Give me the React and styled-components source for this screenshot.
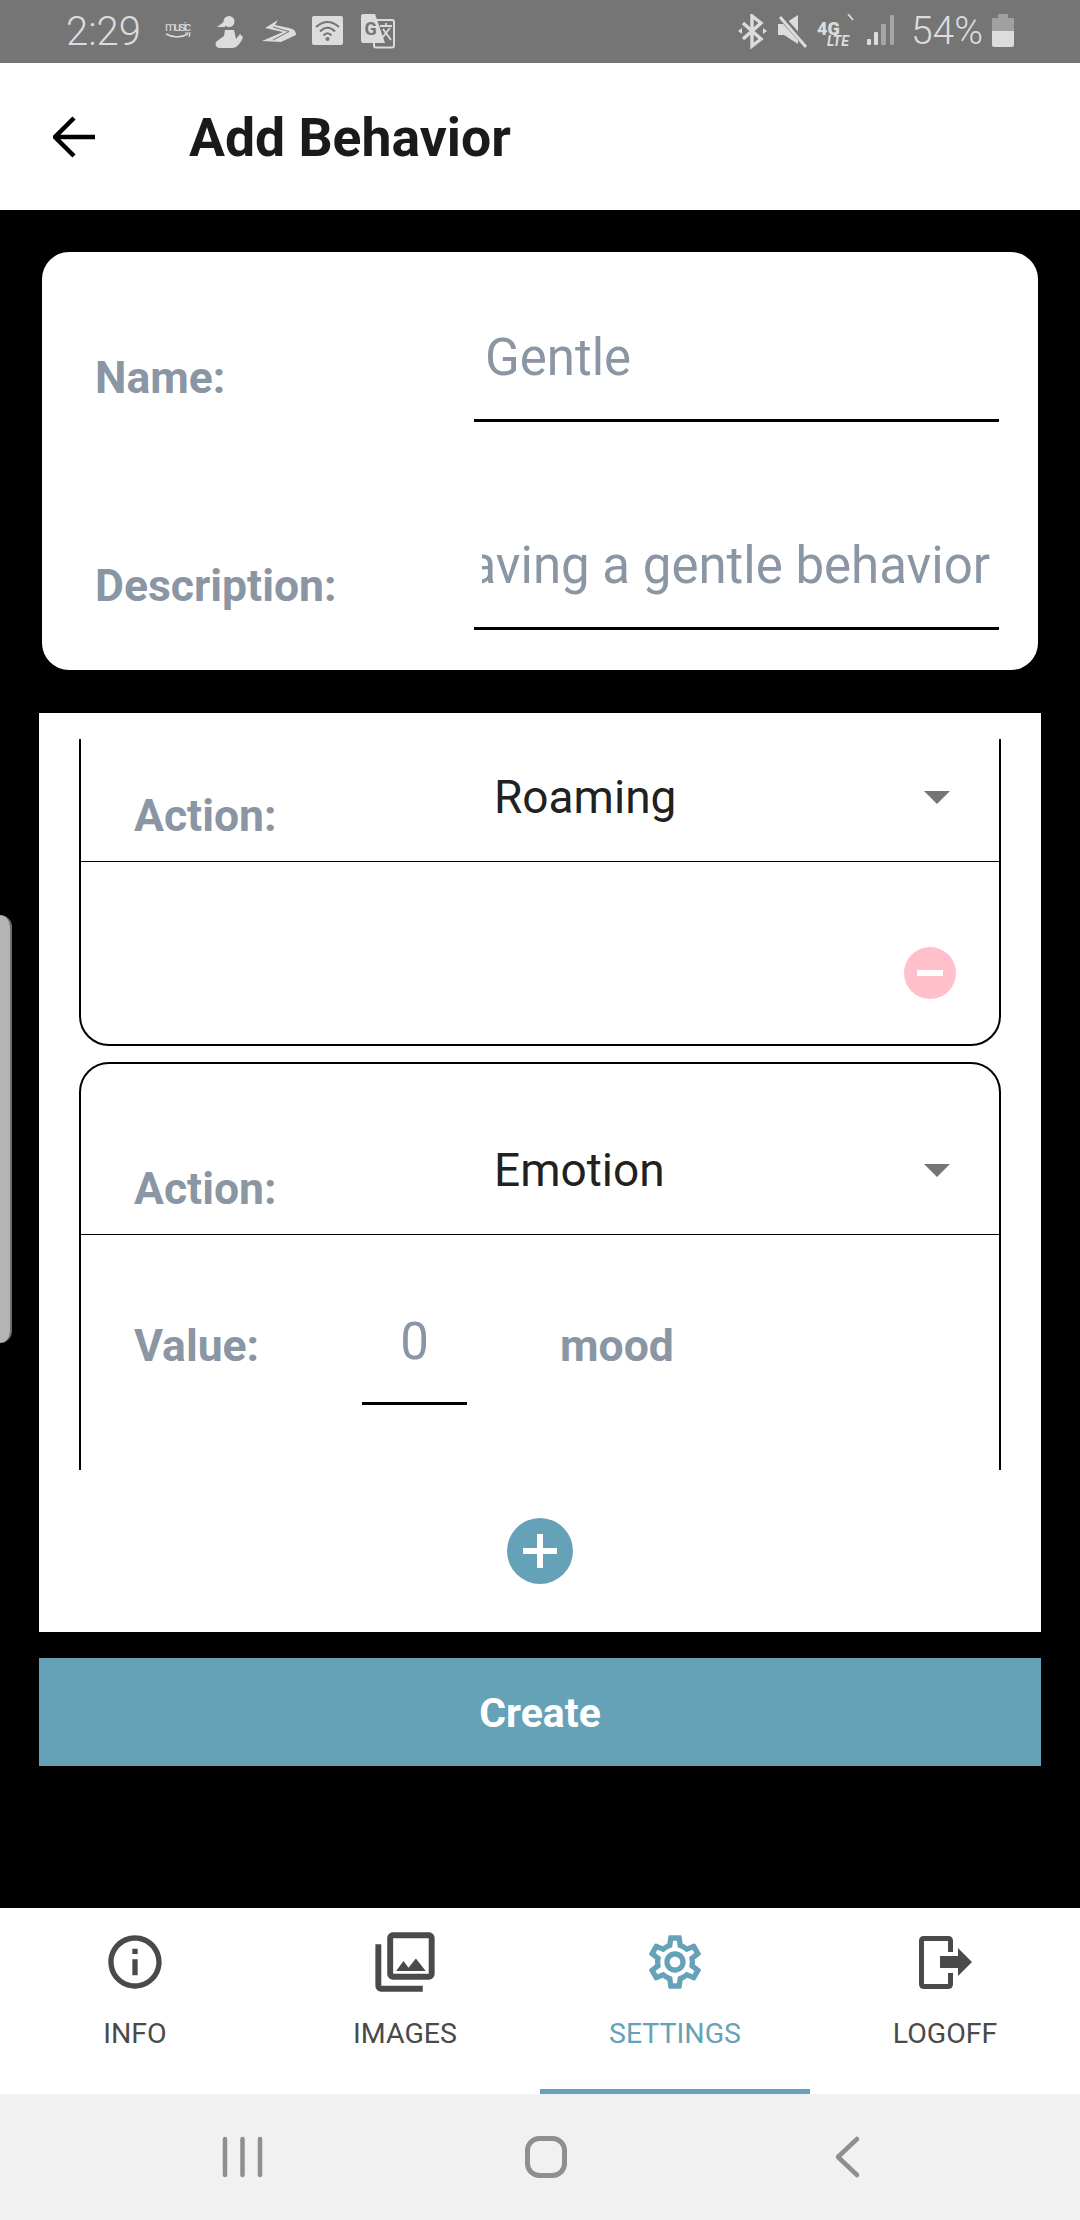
import React from "react"
import styled, { createGlobalStyle } from "styled-components"

const GlobalStyle = createGlobalStyle`
  html, body {
    margin: 0;
    padding: 0;
    background: #000;
  }
  * {
    box-sizing: border-box;
  }
  body {
    font-family: Roboto, "Liberation Sans", sans-serif;
  }
`

const Page = styled.div`
  position: relative;
  width: 1080px;
  height: 2220px;
  display: flex;
  flex-direction: column;
  overflow: hidden;
  background: #000;
`

const StatusBar = styled.div`
  height: 63px;
  flex: none;
  display: flex;
  align-items: center;
  justify-content: space-between;
  padding: 0 66px;
  background: #757575;
  color: #dcdcdc;
`

const StatusGroup = styled.div`
  display: flex;
  align-items: center;
`

const StatusText = styled.span`
  font-size: ${(p) => p.$size}px;
  font-weight: 300;
  line-height: 63px;
  margin-left: ${(p) => p.$ml || 0}px;
`

const StatusIcon = styled.svg`
  display: block;
  height: 36px;
  flex: none;
  margin-left: ${(p) => p.$ml || 0}px;
`

const Header = styled.header`
  height: 147px;
  flex: none;
  display: flex;
  align-items: center;
  padding-left: 53px;
  background: #fff;
`

const BackArrow = styled.svg`
  display: block;
  width: 42px;
  height: 42px;
  margin-right: 94px;
`

const Title = styled.h1`
  margin: 0;
  padding-top: 2px;
  font-size: 53.5px;
  line-height: 64px;
  font-weight: 700;
  color: #1a1a1a;
`

const Main = styled.main`
  flex: 1;
  display: flex;
  flex-direction: column;
  padding-top: 42px;
  background: #000;
`

const InfoCard = styled.section`
  height: 418px;
  margin: 0 42px 43px;
  padding: 0 39px 0 53px;
  border-radius: 27px;
  background: #fff;
`

const FormRow = styled.div`
  display: flex;
  align-items: flex-end;
  height: ${(p) => p.$height}px;
`

const FieldLabel = styled.label`
  display: block;
  flex: none;
  font-size: 44.5px;
  line-height: 52px;
  font-weight: 700;
  color: #8a96a3;
  padding-bottom: ${(p) => p.$pb}px;
`

const TextField = styled.div`
  flex: none;
  width: 525px;
  margin-left: auto;
  height: ${(p) => p.$height}px;
  padding: 0 9px 0 8px;
  border-bottom: 3px solid #000;
  font-size: 51px;
  line-height: 60px;
  color: #8a96a3;
`

const FieldValue = styled.div`
  display: flex;
  justify-content: ${(p) => (p.$end ? "flex-end" : "flex-start")};
  padding-left: ${(p) => (p.$end ? 0 : 3)}px;
  overflow: hidden;
  white-space: nowrap;
`

const Panel = styled.section`
  height: 919px;
  padding-top: 26px;
  margin: 0 39px 26px;
  background: #fff;
`

const ScrollArea = styled.div`
  height: 731px;
  margin: 0 40px 48px;
  overflow: hidden;
`

const ScrollContent = styled.div`
  margin-top: -50px;
  display: flex;
  flex-direction: column;
  gap: 16px;
`

const ActionCard = styled.article`
  border: 2px solid #000;
  border-radius: 30px;
`

const ActionRow = styled.div`
  height: 171px;
  display: flex;
  align-items: flex-end;
  padding-left: 53px;
  border-bottom: 1px solid #000;
`

const ActionLabel = styled(FieldLabel)`
  width: 360px;
`

const Select = styled.div`
  flex: 1;
  display: flex;
  align-items: center;
  justify-content: space-between;
  height: 60px;
  margin-bottom: 34px;
  padding-right: 49px;
  font-size: 46px;
  line-height: 60px;
  color: #212121;
`

const Caret = styled.span`
  width: 0;
  height: 0;
  border-left: 13px solid transparent;
  border-right: 13px solid transparent;
  border-top: 13px solid #757575;
`

const CardBody = styled.div`
  height: 182px;
  display: flex;
  flex-direction: column;
  align-items: flex-end;
  justify-content: flex-end;
  padding: 0 43px 45px 0;
`

const ValueBody = styled.div`
  height: 300px;
  display: flex;
  align-items: flex-start;
  padding: 77px 0 0 53px;
`

const ValueLabel = styled(FieldLabel)`
  width: 228px;
  margin-top: 8px;
`

const UnitLabel = styled(FieldLabel)`
  margin: 8px 0 0 93px;
`

const NumberField = styled.div`
  width: 105px;
  height: 93px;
  border-bottom: 3px solid #000;
  text-align: center;
  font-size: 51px;
  line-height: 60px;
  color: #8a96a3;
`

const RoundButton = styled.button`
  display: flex;
  align-items: center;
  justify-content: center;
  flex: none;
  width: ${(p) => p.$size}px;
  height: ${(p) => p.$size}px;
  margin: ${(p) => (p.$center ? "0 auto" : "0")};
  padding: 0;
  border: none;
  border-radius: 50%;
  background: ${(p) => p.$bg};
`

const CreateButton = styled.button`
  display: block;
  height: 108px;
  margin: 0 39px;
  padding: 2px 0 0;
  border: none;
  background: #65a2b8;
  color: #fff;
  font-family: inherit;
  font-size: 41px;
  font-weight: 700;
`

const BottomNav = styled.nav`
  height: 186px;
  flex: none;
  display: grid;
  grid-template-columns: repeat(4, 1fr);
  background: #fff;
`

const NavItem = styled.div`
  position: relative;
  height: 186px;
  padding-top: 22px;
  display: flex;
  flex-direction: column;
  align-items: center;
  font-size: 28.5px;
  line-height: 34px;
  color: ${(p) => (p.$active ? "#65a2b8" : "#4a4a4a")};
  border-bottom: 5px solid ${(p) => (p.$active ? "#65a2b8" : "transparent")};
`

const NavIcon = styled.svg`
  display: block;
  width: 64px;
  height: 64px;
  margin-bottom: 23px;
  fill: currentColor;
`

const SystemNav = styled.div`
  flex: none;
  height: 126px;
  background: #f1f1f1;
  display: flex;
  align-items: center;
  justify-content: center;
`

const SystemIcons = styled.svg`
  display: block;
  width: 1080px;
  height: 126px;
`

const EdgeHandle = styled.div`
  position: absolute;
  left: 0;
  top: 915px;
  width: 12px;
  height: 428px;
  background: #b4b4b4;
  border-right: 2px solid #6e6e6e;
  border-radius: 0 12px 12px 0;
`

const light = "#dcdcdc"

const StatusLeft = () => (
  <StatusGroup>
    <StatusText $size={40}>2:29</StatusText>
    <StatusIcon $ml={24} width="26" viewBox="0 0 26 36">
      <text x="0" y="17" fontSize="12.5" fill={light} fontFamily="Roboto" textLength="26">music</text>
      <path d="M1 20 Q12 26 23 20" fill="none" stroke={light} strokeWidth="1.5" />
      <path d="M20 19 L25 19 L24 23" fill="none" stroke={light} strokeWidth="1.2" />
    </StatusIcon>
    <StatusIcon $ml={24} width="28" viewBox="0 0 28 36">
      <circle cx="14" cy="7.500" r="5.500" fill={light} />
      <path d="M10 7 L2 13 L10 13 Z" fill={light} />
      <path d="M10 16 H19 L21 25 L25 20 L28 23 C26 29 22 34 17 34 H5 C1 34 -1 30 2 27 L9 22 Z" fill={light} />
    </StatusIcon>
    <StatusIcon $ml={18} width="35" viewBox="0 0 35 36">
      <path d="M17 6 L4 14 L22 18 L1 27 L20 28 L35 21 C35 17 33 15 28 14 L14 11 Z" fill={light} />
      <path d="M12 13 L28 17.500 L12 26" fill="none" stroke="#757575" strokeWidth="1" />
    </StatusIcon>
    <StatusIcon $ml={16} width="31" viewBox="0 0 31 36">
      <rect x="0" y="2" width="31" height="29" rx="2" fill={light} />
      <path d="M4 13 Q15.500 3 27 13 M8 17.500 Q15.500 10 23 17.500 M11.500 21.500 Q15.500 17 19.500 21.500" fill="none" stroke="#757575" strokeWidth="2" />
      <circle cx="15.500" cy="25" r="2" fill="#757575" />
    </StatusIcon>
    <StatusIcon $ml={18} width="34" viewBox="0 0 34 36">
      <rect x="13" y="6" width="20" height="27.500" rx="2" fill="#757575" stroke={light} strokeWidth="2" />
      <path d="M2 0 H14 L24 29 H2 C1 29 0 28 0 27 V2 C0 1 1 0 2 0 Z" fill={light} />
      <text x="3.500" y="21" fontSize="18" fontWeight="700" fill="#757575" fontFamily="Roboto">G</text>
      <path d="M19 12 H31 M25 9 V12 M21 24 L29 14 M22 15 L30 26" fill="none" stroke={light} strokeWidth="1.800" />
    </StatusIcon>
  </StatusGroup>
)

const StatusRight = () => (
  <StatusGroup>
    <StatusIcon width="29" viewBox="0 0 29 36">
      <path d="M14 17 L14 2 L23 9 L5 25 M14 17 L14 32 L23 25 L5 9" fill="none" stroke={light} strokeWidth="3.400" />
      <path d="M0 17 L4 14 V20 Z M29 17 L25 14 V20 Z" fill={light} />
    </StatusIcon>
    <StatusIcon $ml={11} width="30" viewBox="0 0 30 36">
      <path d="M0 10 H6 L20 1 V30 L6 21 H0 Z" fill={light} />
      <path d="M3 3 L29 32" stroke="#757575" strokeWidth="6" />
      <path d="M2 3 L28 33" stroke={light} strokeWidth="3" />
    </StatusIcon>
    <StatusIcon $ml={9} width="38" viewBox="0 0 38 36">
      <text fill={light} fontFamily="Roboto" fontWeight="900">
        <tspan x="0" y="21" fontSize="18">4G</tspan>
        <tspan x="10" y="32" fontSize="14" fontWeight="700" fontStyle="italic">LTE</tspan>
      </text>
      <path d="M31 0 L36 6" stroke={light} strokeWidth="1.800" />
    </StatusIcon>
    <StatusIcon $ml={12} width="27" viewBox="0 0 27 36">
      <rect x="0" y="25" width="4" height="6" rx="1" fill={light} />
      <rect x="7" y="18" width="4" height="13" rx="1" fill={light} />
      <rect x="14" y="10" width="5" height="21" rx="1" fill="#a6a6a6" />
      <rect x="23" y="1" width="4" height="30" rx="1" fill="#a6a6a6" />
    </StatusIcon>
    <StatusText $size={39} $ml={17}>54%</StatusText>
    <StatusIcon $ml={9} width="22" viewBox="0 0 22 36">
      <rect x="6" y="0" width="10" height="5" rx="1" fill="#a0a0a0" />
      <rect x="0" y="4" width="22" height="14" fill="#a0a0a0" />
      <path d="M0 17 H22 V31 C22 32 21 33 20 33 H2 C1 33 0 32 0 31 Z" fill={light} />
    </StatusIcon>
  </StatusGroup>
)

const ActionHeader = ({ value }) => (
  <ActionRow>
    <ActionLabel $pb={19}>Action:</ActionLabel>
    <Select>
      {value}
      <Caret />
    </Select>
  </ActionRow>
)

const App = () => (
  <Page>
    <GlobalStyle />
    <StatusBar>
      <StatusLeft />
      <StatusRight />
    </StatusBar>

    <Header>
      <BackArrow viewBox="0 0 42 42">
        <path d="M42 21 H3 M21 2 L2 21 L21 40" fill="none" stroke="#000" strokeWidth="4.500" />
      </BackArrow>
      <Title>Add Behavior</Title>
    </Header>

    <Main>
      <InfoCard>
        <FormRow $height={170}>
          <FieldLabel $pb={18}>Name:</FieldLabel>
          <TextField $height={94}>
            <FieldValue>Gentle</FieldValue>
          </TextField>
        </FormRow>
        <FormRow $height={208}>
          <FieldLabel $pb={18}>Description:</FieldLabel>
          <TextField $height={94}>
            <FieldValue $end>Having a gentle behavior</FieldValue>
          </TextField>
        </FormRow>
      </InfoCard>

      <Panel>
        <ScrollArea>
          <ScrollContent>
            <ActionCard>
              <ActionHeader value="Roaming" />
              <CardBody>
                <RoundButton $size={52} $bg="#ffc0cb">
                  <svg width="26" height="6" viewBox="0 0 26 6">
                    <rect width="26" height="6" fill="#fff" />
                  </svg>
                </RoundButton>
              </CardBody>
            </ActionCard>
            <ActionCard>
              <ActionHeader value="Emotion" />
              <ValueBody>
                <ValueLabel $pb={0}>Value:</ValueLabel>
                <NumberField>0</NumberField>
                <UnitLabel $pb={0}>mood</UnitLabel>
              </ValueBody>
            </ActionCard>
          </ScrollContent>
        </ScrollArea>
        <RoundButton $size={66} $bg="#65a2b8" $center>
          <svg width="34" height="34" viewBox="0 0 34 34">
            <path d="M17 0 V34 M0 17 H34" stroke="#fff" strokeWidth="6" />
          </svg>
        </RoundButton>
      </Panel>

      <CreateButton>Create</CreateButton>
    </Main>

    <BottomNav>
      <NavItem>
        <NavIcon viewBox="0 0 24 24">
          <path d="M11 7h2v2h-2zm0 4h2v6h-2zm1-9C6.48 2 2 6.48 2 12s4.48 10 10 10 10-4.48 10-10S17.52 2 12 2zm0 18c-4.41 0-8-3.59-8-8s3.59-8 8-8 8 3.59 8 8-3.59 8-8 8z" />
        </NavIcon>
        INFO
      </NavItem>
      <NavItem>
        <NavIcon viewBox="1.2 1.2 21.6 21.6">
          <path d="M20 4v12H8V4h12m0-2H8c-1.1 0-2 .9-2 2v12c0 1.1.9 2 2 2h12c1.1 0 2-.9 2-2V4c0-1.1-.9-2-2-2zm-8.5 9.67l1.69 2.26 2.48-3.1L19 15H9zM2 6v14c0 1.1.9 2 2 2h14v-2H4V6H2z" />
        </NavIcon>
        IMAGES
      </NavItem>
      <NavItem $active>
        <NavIcon viewBox="0 0 24 24">
          <path d="M19.43 12.98c.04-.32.07-.64.07-.98 0-.34-.03-.66-.07-.98l2.11-1.65c.19-.15.24-.42.12-.64l-2-3.46c-.09-.16-.26-.25-.44-.25-.06 0-.12.01-.17.03l-2.49 1c-.52-.4-1.08-.73-1.69-.98l-.38-2.65C14.46 2.18 14.25 2 14 2h-4c-.25 0-.46.18-.49.42l-.38 2.65c-.61.25-1.17.59-1.69.98l-2.49-1c-.06-.02-.12-.03-.18-.03-.17 0-.34.09-.43.25l-2 3.46c-.13.22-.07.49.12.64l2.11 1.65c-.04.32-.07.65-.07.98 0 .33.03.66.07.98l-2.11 1.65c-.19.15-.24.42-.12.64l2 3.46c.09.16.26.25.44.25.06 0 .12-.01.17-.03l2.49-1c.52.4 1.08.73 1.69.98l.38 2.65c.03.24.24.42.49.42h4c.25 0 .46-.18.49-.42l.38-2.65c.61-.25 1.17-.59 1.69-.98l2.49 1c.06.02.12.03.18.03.17 0 .34-.09.43-.25l2-3.46c.12-.22.07-.49-.12-.64l-2.11-1.65zm-1.98-1.71c.04.31.05.52.05.73 0 .21-.02.43-.05.73l-.14 1.13.89.7 1.08.84-.7 1.21-1.27-.51-1.04-.42-.9.68c-.43.32-.84.56-1.25.73l-1.06.43-.16 1.13-.2 1.35h-1.4l-.19-1.35-.16-1.13-1.06-.43c-.43-.18-.83-.41-1.23-.71l-.91-.7-1.06.43-1.27.51-.7-1.21 1.08-.84.89-.7-.14-1.13c-.03-.31-.05-.54-.05-.74s.02-.43.05-.73l.14-1.13-.89-.7-1.08-.84.7-1.21 1.27.51 1.04.42.9-.68c.43-.32.84-.56 1.25-.73l1.06-.43.16-1.13.2-1.35h1.39l.19 1.35.16 1.13 1.06.43c.43.18.83.41 1.23.71l.91.7 1.06-.43 1.27-.51.7 1.21-1.07.85-.89.7.14 1.13zM12 8c-2.21 0-4 1.79-4 4s1.79 4 4 4 4-1.79 4-4-1.79-4-4-4zm0 6c-1.1 0-2-.9-2-2s.9-2 2-2 2 .9 2 2-.9 2-2 2z" />
        </NavIcon>
        SETTINGS
      </NavItem>
      <NavItem>
        <NavIcon viewBox="0 0 64 64">
          <path d="M37.500 22 V11 C37.500 9.500 36.500 8.500 35 8.500 H11 C9.500 8.500 8.500 9.500 8.500 11 V54 C8.500 55.500 9.500 56.500 11 56.500 H35 C36.500 56.500 37.500 55.500 37.500 54 V43" fill="none" stroke="currentColor" strokeWidth="5" />
          <path d="M27 26 H45 V18 L59 32 L45 46 V38 H27 Z" />
        </NavIcon>
        LOGOFF
      </NavItem>
    </BottomNav>

    <SystemNav>
      <SystemIcons viewBox="0 0 1080 126">
        <path d="M225 45 V81 M242.500 45 V81 M260 45 V81" stroke="#8f8f8f" strokeWidth="4.500" strokeLinecap="round" />
        <rect x="527.500" y="44.500" width="37" height="37" rx="12" fill="none" stroke="#8f8f8f" strokeWidth="5" />
        <path d="M857 45 L838 63 L857 81" fill="none" stroke="#8f8f8f" strokeWidth="4.500" strokeLinecap="round" strokeLinejoin="round" />
      </SystemIcons>
    </SystemNav>

    <EdgeHandle />
  </Page>
)

export default App
